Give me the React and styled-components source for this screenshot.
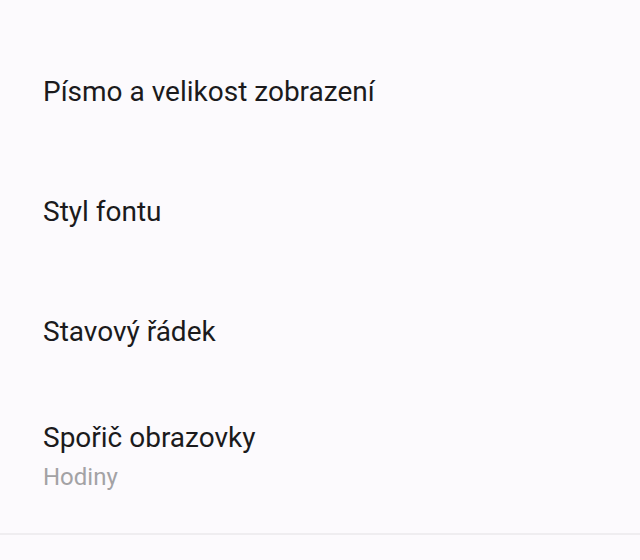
import React from 'react';
import styled, { createGlobalStyle } from 'styled-components';

const GlobalStyle = createGlobalStyle`
  html, body {
    margin: 0;
    padding: 0;
    background: #fcfafd;
  }
  body {
    font-family: Roboto, "Noto Sans", sans-serif;
    -webkit-font-smoothing: antialiased;
  }
`;

const Page = styled.div`
  width: 640px;
  height: 560px;
  background: #fcfafd;
  overflow: hidden;
  display: flex;
  flex-direction: column;
`;

const List = styled.div`
  display: flex;
  flex-direction: column;
  padding-top: 31px;
`;

const Item = styled.div`
  display: flex;
  flex-direction: column;
  justify-content: center;
  padding: 0 43px;
  height: ${p => p.height}px;
`;

const Title = styled.div`
  font-size: 28px;
  line-height: 34px;
  color: #1b1a1c;
`;

const Summary = styled.div`
  font-size: 24px;
  line-height: 30px;
  color: #a3a2a5;
  margin-top: 7px;
`;

const Divider = styled.div`
  height: 2px;
  background: #efedf0;
  margin-top: 13px;
`;

const items = [
  { title: 'Písmo a velikost zobrazení', height: 121 },
  { title: 'Styl fontu', height: 120 },
  { title: 'Stavový řádek', height: 120 },
  { title: 'Spořič obrazovky', summary: 'Hodiny', height: 128 },
];

export default function App() {
  return (
    <Page>
      <GlobalStyle />
      <List>
        {items.map(item => (
          <Item key={item.title} height={item.height}>
            <Title>{item.title}</Title>
            {item.summary && <Summary>{item.summary}</Summary>}
          </Item>
        ))}
      </List>
      <Divider />
    </Page>
  );
}
